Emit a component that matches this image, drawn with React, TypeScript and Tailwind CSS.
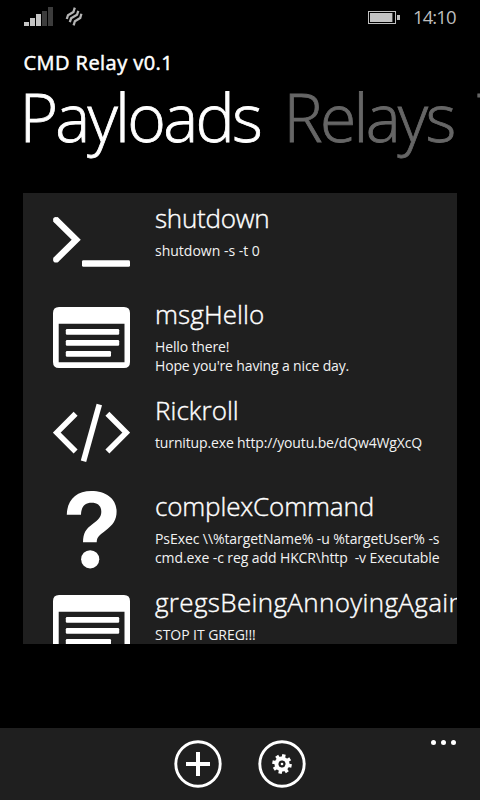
import type { ReactNode } from "react";

type Payload = {
  title: string;
  titleClass: string;
  lines: { text: string; className: string }[];
  icon: ReactNode;
};

const iconClass = "h-24 w-[77px] shrink-0 fill-white";

function TerminalIcon() {
  return (
    <svg viewBox="0 0 77 96" className={iconClass}>
      <path
        d="M2.4 26.2 23.2 46.7 2.4 67.2"
        fill="none"
        stroke="#fff"
        strokeWidth="6.4"
      />
      <circle cx="2.9" cy="26.7" r="2.8" />
      <circle cx="2.9" cy="66.7" r="2.8" />
      <rect x="29" y="67.2" width="48" height="6.6" rx="1.4" />
    </svg>
  );
}

function WindowIcon() {
  return (
    <svg viewBox="0 0 77 96" className={iconClass}>
      <path
        fillRule="evenodd"
        d="M6 18H71Q77 18 77 24V73Q77 79 71 79H6Q0 79 0 73V24Q0 18 6 18ZM5.7 34.8V73.2H71.5V34.8Z"
      />
      <rect x="12.8" y="40" width="53.4" height="5.8" rx="1.2" />
      <rect x="12.8" y="51" width="53.4" height="5.8" rx="1.2" />
      <rect x="12.8" y="62" width="45.2" height="5.8" rx="1.2" />
    </svg>
  );
}

function CodeIcon() {
  return (
    <svg viewBox="0 0 77 96" className={iconClass}>
      <g fill="none" stroke="#fff" strokeWidth="5.6" transform="translate(0 1.4)">
        <path d="M22.6 27.3 3.8 46.2 22.6 65.1M54.4 27.3 73.2 46.2 54.4 65.1" />
        <path d="M46.3 18.2 30.5 74.8" />
      </g>
    </svg>
  );
}

function QuestionIcon() {
  return (
    <svg viewBox="0 0 77 96" className={iconClass}>
      <g transform="translate(0 6)">
        <path d="M13.8 27.7C14 13 23.5 4 38.2 4 53.5 4 63.6 12 63.6 24.5 63.6 33 60 38 52 44 46.5 48 43.8 50 43.7 55.2H30C30 46 33 42 39 37.5 45.5 32.7 48.3 30 48.3 24.8 48.3 19 44.8 15.8 38.6 15.8 31.8 15.8 28.2 19.8 28 27.7Z" />
        <circle cx="37.2" cy="72.3" r="9.1" />
      </g>
    </svg>
  );
}

const payloads: Payload[] = [
  {
    title: "shutdown",
    titleClass: "tracking-[-0.25px]",
    lines: [{ text: "shutdown -s -t 0", className: "" }],
    icon: <TerminalIcon />,
  },
  {
    title: "msgHello",
    titleClass: "tracking-[0.1px]",
    lines: [
      { text: "Hello there!", className: "tracking-[-0.15px]" },
      { text: "Hope you're having a nice day.", className: "tracking-[-0.15px]" },
    ],
    icon: <WindowIcon />,
  },
  {
    title: "Rickroll",
    titleClass: "tracking-[0.05px]",
    lines: [{ text: "turnitup.exe http://youtu.be/dQw4WgXcQ", className: "tracking-[-0.14px]" }],
    icon: <CodeIcon />,
  },
  {
    title: "complexCommand",
    titleClass: "tracking-[-0.15px]",
    lines: [
      { text: "PsExec \\\\%targetName% -u %targetUser% -s", className: "tracking-[-0.08px]" },
      { text: "cmd.exe -c reg add HKCR\\http  -v Executable", className: "tracking-[-0.1px]" },
    ],
    icon: <QuestionIcon />,
  },
  {
    title: "gregsBeingAnnoyingAgain",
    titleClass: "tracking-[0.35px]",
    lines: [{ text: "STOP IT GREG!!!", className: "tracking-[-0.05px]" }],
    icon: <WindowIcon />,
  },
];

function StatusBar() {
  return (
    <div className="flex h-8 items-start justify-between pr-[24px] pl-6 text-[#bdbdbd]">
      <div className="flex pt-[7px]">
        <div className="flex h-[19px] items-end gap-px">
          <div className="h-1 w-[5px] bg-[#c4c4c4]" />
          <div className="h-2 w-[5px] bg-[#c4c4c4]" />
          <div className="h-3 w-[5px] bg-[#c4c4c4]" />
          <div className="h-[15px] w-[5px] bg-[#3c3c3c]" />
          <div className="h-[19px] w-[5px] bg-[#3c3c3c]" />
        </div>
        <svg viewBox="0 0 18 20" className="ml-[12px] h-5 w-[18px] fill-none stroke-[#b4b4b4] stroke-[2.3]">
          <path d="M1.8 12 3 8.2 8.4 5 9.8 .6" />
          <path d="M4.8 15.2 6.1 11.3 12 7.8 13.3 3.8" />
          <path d="M8.6 18.4 9.9 14.2 15.2 11 16.4 6.8" />
        </svg>
      </div>
      <div className="flex">
        <svg viewBox="0 0 32 13" className="mt-[11px] mr-[13px] h-[13px] w-8">
          <rect x=".5" y=".5" width="27" height="12" fill="none" stroke="#c0c0c0" />
          <rect x="2" y="2" width="22.4" height="9" fill="#c4c4c4" />
          <rect x="29" y="4" width="3" height="5" fill="#c0c0c0" />
        </svg>
        <span className="mt-[5px] -mr-px w-11 text-[18.5px] leading-6 tracking-[-0.9px] whitespace-nowrap">14:10</span>
      </div>
    </div>
  );
}

function PivotHeader() {
  return (
    <div className="flex h-[78px] pl-[19.5px] text-[66px] leading-[78px] font-light tracking-[-2.75px] whitespace-nowrap">
      <span className="w-[264px] shrink-0 [-webkit-text-stroke:0.8px_#fff]">Payloads</span>
      <span className="w-[194px] shrink-0 text-[#666] [-webkit-text-stroke:0.8px_#666]">Relays</span>
      <span className="shrink-0 text-[#666] [-webkit-text-stroke:0.8px_#666]">Targets</span>
    </div>
  );
}

function PayloadRow({ title, titleClass, lines, icon }: Payload) {
  return (
    <div className="flex h-24 pl-[30px]">
      {icon}
      <div className="ml-[25px] pt-[7px] whitespace-pre text-white">
        <div className={`h-9 text-[26px] leading-9 font-light [-webkit-text-stroke:0.4px_#fff] ${titleClass}`}>{title}</div>
        <div className="mt-[5px] text-[14px] leading-[19px] text-[#f2f2f2]">
          {lines.map((line) => (
            <div key={line.text} className={line.className}>
              {line.text}
            </div>
          ))}
        </div>
      </div>
    </div>
  );
}

function AppBar() {
  return (
    <div className="grid h-[72px] grid-cols-[1fr_auto_1fr] bg-[#1f1f1f]">
      <div />
      <div className="flex gap-9 pt-3">
        <button className="size-12" aria-label="Add">
          <svg viewBox="0 0 48 48" className="size-12 fill-none stroke-white">
            <circle cx="24" cy="24" r="22.2" strokeWidth="2.9" />
            <path d="M12 24H36M24 12V36" strokeWidth="4" />
          </svg>
        </button>
        <button className="size-12" aria-label="Settings">
          <svg viewBox="0 0 48 48" className="size-12 fill-none stroke-white">
            <circle cx="24" cy="24" r="22.2" strokeWidth="2.9" />
            <g transform="rotate(12 24 24)">
              <circle cx="24" cy="24" r="5.5" strokeWidth="4" />
              <path
                d="M24 17.5V14.2M24 30.5V33.8M17.5 24H14.2M30.5 24H33.8M19.4 19.4 17.1 17.1M28.6 28.6 30.9 30.9M28.6 19.4 30.9 17.1M19.4 28.6 17.1 30.9"
                strokeWidth="3.5"
              />
            </g>
            <circle cx="24" cy="24" r="1.3" className="fill-white stroke-none" />
          </svg>
        </button>
      </div>
      <div className="flex justify-end gap-[5px] pt-3 pr-6">
        <div className="size-[5px] rounded-full bg-white" />
        <div className="size-[5px] rounded-full bg-white" />
        <div className="size-[5px] rounded-full bg-white" />
      </div>
    </div>
  );
}

export default function App() {
  return (
    <div className="flex h-[800px] w-[480px] flex-col overflow-hidden bg-black font-['Open_Sans','Noto_Sans',sans-serif] text-white">
      <StatusBar />
      <h1 className="mt-[17px] h-7 pl-[23.5px] text-[20px] leading-7 font-normal tracking-[0.45px] [-webkit-text-stroke:0.5px_#fff]">
        CMD Relay v0.1
      </h1>
      <PivotHeader />
      <main className="mx-[23px] mt-[38px] h-[451px] overflow-hidden bg-[#1f1f1f]">
        {payloads.map((payload) => (
          <PayloadRow key={payload.title} {...payload} />
        ))}
      </main>
      <div className="grow" />
      <AppBar />
    </div>
  );
}
